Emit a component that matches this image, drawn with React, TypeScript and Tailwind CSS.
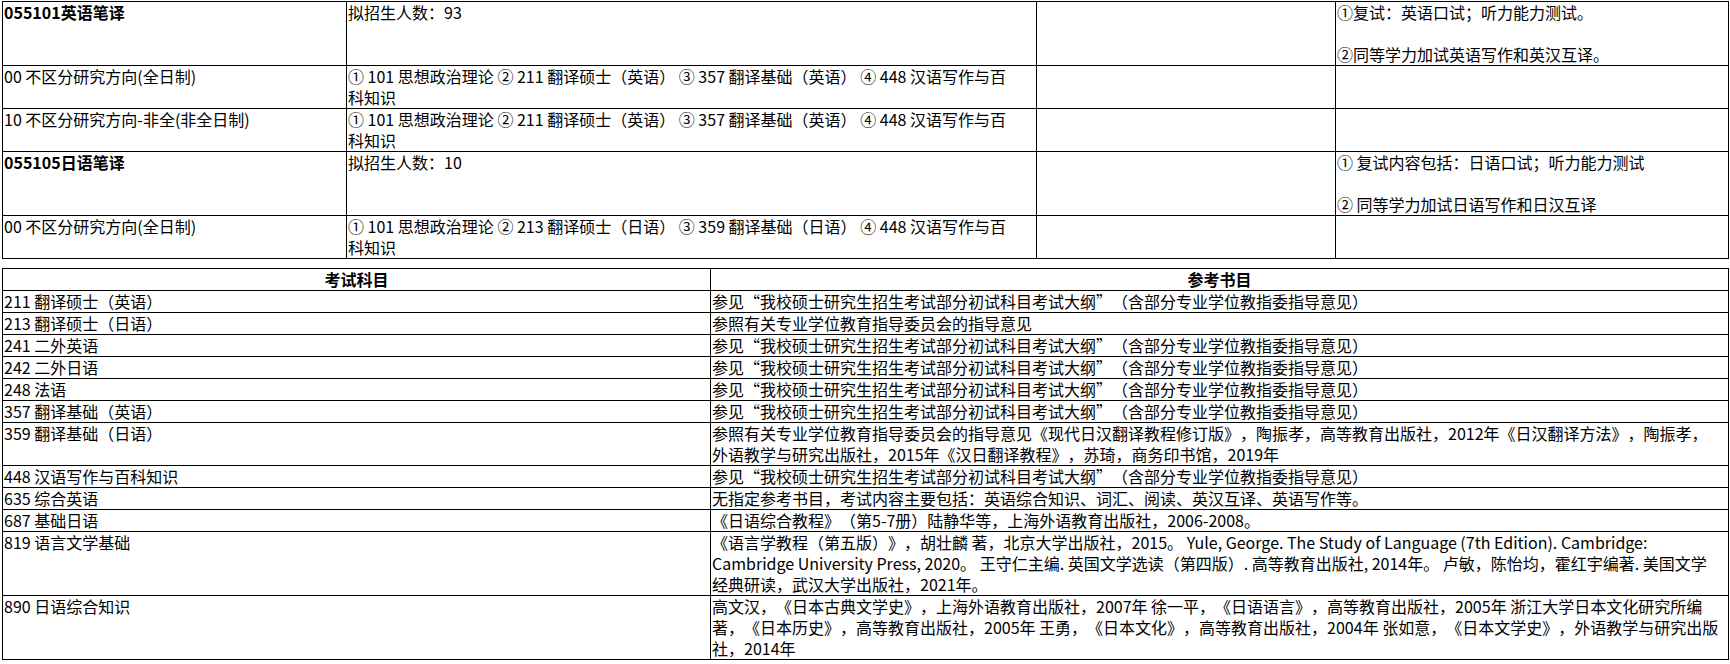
const font = { fontFamily: '"Noto Sans CJK SC", "Noto Sans", sans-serif' }

const base = 'border border-black px-[1px] align-top text-left'
const cell = base + ' font-normal'
const boldCell = base + ' font-bold'

const outline = '参见“我校硕士研究生招生考试部分初试科目考试大纲”（含部分专业学位教指委指导意见）'
const guide = '参照有关专业学位教育指导委员会的指导意见'

type Book = { subject: string; refs: string[] }

const books: Book[] = [
  { subject: '211 翻译硕士（英语）', refs: [outline] },
  { subject: '213 翻译硕士（日语）', refs: [guide] },
  { subject: '241 二外英语', refs: [outline] },
  { subject: '242 二外日语', refs: [outline] },
  { subject: '248 法语', refs: [outline] },
  { subject: '357 翻译基础（英语）', refs: [outline] },
  {
    subject: '359 翻译基础（日语）',
    refs: [
      '参照有关专业学位教育指导委员会的指导意见《现代日汉翻译教程修订版》，陶振孝，高等教育出版社，2012年《日汉翻译方法》，陶振孝，',
      '外语教学与研究出版社，2015年《汉日翻译教程》，苏琦，商务印书馆，2019年',
    ],
  },
  { subject: '448 汉语写作与百科知识', refs: [outline] },
  { subject: '635 综合英语', refs: ['无指定参考书目，考试内容主要包括：英语综合知识、词汇、阅读、英汉互译、英语写作等。'] },
  { subject: '687 基础日语', refs: ['《日语综合教程》（第5-7册）陆静华等，上海外语教育出版社，2006-2008。'] },
  {
    subject: '819 语言文学基础',
    refs: [
      '《语言学教程（第五版）》，胡壮麟 著，北京大学出版社，2015。 Yule, George. The Study of Language (7th Edition). Cambridge:',
      'Cambridge University Press, 2020。 王守仁主编. 英国文学选读（第四版）. 高等教育出版社, 2014年。 卢敏，陈怡均，霍红宇编著. 美国文学',
      '经典研读，武汉大学出版社，2021年。',
    ],
  },
  {
    subject: '890 日语综合知识',
    refs: [
      '高文汉，《日本古典文学史》，上海外语教育出版社，2007年 徐一平，《日语语言》，高等教育出版社，2005年 浙江大学日本文化研究所编',
      '著，《日本历史》，高等教育出版社，2005年 王勇，《日本文化》，高等教育出版社，2004年 张如意，《日本文学史》，外语教学与研究出版',
      '社，2014年',
    ],
  },
]

function Lines({ lines }: { lines: string[] }) {
  return (
    <>
      {lines.map((l, i) => (
        <div key={i} className="whitespace-nowrap min-h-[21px]">
          {l}
        </div>
      ))}
    </>
  )
}

function App() {
  return (
    <div
      lang="zh-CN"
      className="min-h-screen bg-white text-black text-[16px] leading-[21px] pl-[2px] pt-[1px] [text-spacing-trim:space-all]"
      style={font}
    >
      <table className="table-fixed border-collapse w-[1726px]">
        <colgroup>
          <col className="w-[344px]" />
          <col className="w-[690px]" />
          <col className="w-[299px]" />
          <col className="w-[393px]" />
        </colgroup>
        <tbody>
          <tr>
            <td className={boldCell}>055101英语笔译</td>
            <td className={cell}>拟招生人数：93</td>
            <td className={cell}></td>
            <td className={cell}>
              <Lines lines={['①复试：英语口试；听力能力测试。', '', '②同等学力加试英语写作和英汉互译。']} />
            </td>
          </tr>
          <tr>
            <td className={cell}>00 不区分研究方向(全日制)</td>
            <td className={cell}>
              <Lines lines={['① 101 思想政治理论 ② 211 翻译硕士（英语） ③ 357 翻译基础（英语） ④ 448 汉语写作与百', '科知识']} />
            </td>
            <td className={cell}></td>
            <td className={cell}></td>
          </tr>
          <tr>
            <td className={cell}>10 不区分研究方向-非全(非全日制)</td>
            <td className={cell}>
              <Lines lines={['① 101 思想政治理论 ② 211 翻译硕士（英语） ③ 357 翻译基础（英语） ④ 448 汉语写作与百', '科知识']} />
            </td>
            <td className={cell}></td>
            <td className={cell}></td>
          </tr>
          <tr>
            <td className={boldCell}>055105日语笔译</td>
            <td className={cell}>拟招生人数：10</td>
            <td className={cell}></td>
            <td className={cell}>
              <Lines lines={['① 复试内容包括：日语口试；听力能力测试', '', '② 同等学力加试日语写作和日汉互译']} />
            </td>
          </tr>
          <tr>
            <td className={cell}>00 不区分研究方向(全日制)</td>
            <td className={cell}>
              <Lines lines={['① 101 思想政治理论 ② 213 翻译硕士（日语） ③ 359 翻译基础（日语） ④ 448 汉语写作与百', '科知识']} />
            </td>
            <td className={cell}></td>
            <td className={cell}></td>
          </tr>
        </tbody>
      </table>

      <table className="table-fixed border-collapse w-[1726px] mt-[9px]">
        <colgroup>
          <col className="w-[708px]" />
          <col className="w-[1018px]" />
        </colgroup>
        <thead>
          <tr>
            <th className="border border-black px-[1px] font-bold text-center">考试科目</th>
            <th className="border border-black px-[1px] font-bold text-center">参考书目</th>
          </tr>
        </thead>
        <tbody>
          {books.map((b) => (
            <tr key={b.subject}>
              <td className={cell}>{b.subject}</td>
              <td className={cell}>
                <Lines lines={b.refs} />
              </td>
            </tr>
          ))}
        </tbody>
      </table>
    </div>
  )
}

export default App
